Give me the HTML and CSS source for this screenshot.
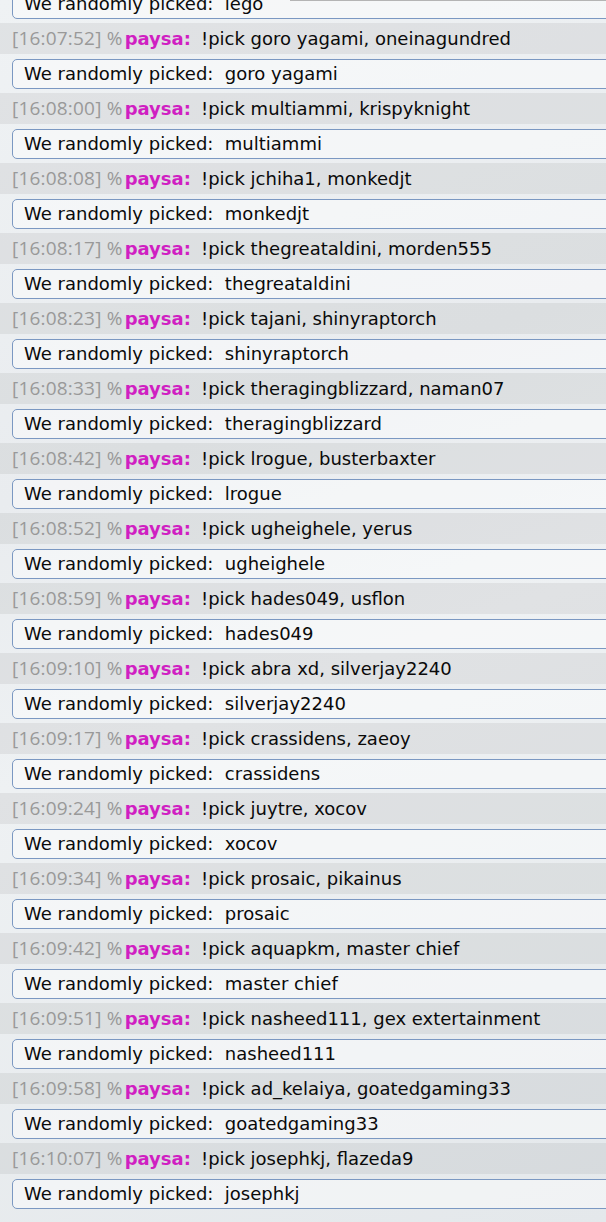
FILE: index.html
```html
<!DOCTYPE html>
<html lang="en">
<head>
    <meta charset="UTF-8">
    <meta name="viewport" content="width=device-width, initial-scale=1.0">
    <title>Chat log</title>
    <link rel="stylesheet" href="styles.css">
</head>
<body>
    <div class="topline"></div>

    <div class="chatlog">
        <div class="infobox">We randomly picked:&nbsp; lego</div>

        <div class="chat"><span class="stamp">[16:07:52] %</span><strong class="name">paysa:</strong><span class="msg">!pick goro yagami, oneinagundred</span></div>
        <div class="infobox">We randomly picked:&nbsp; goro yagami</div>

        <div class="chat"><span class="stamp">[16:08:00] %</span><strong class="name">paysa:</strong><span class="msg">!pick multiammi, krispyknight</span></div>
        <div class="infobox">We randomly picked:&nbsp; multiammi</div>

        <div class="chat"><span class="stamp">[16:08:08] %</span><strong class="name">paysa:</strong><span class="msg">!pick jchiha1, monkedjt</span></div>
        <div class="infobox">We randomly picked:&nbsp; monkedjt</div>

        <div class="chat"><span class="stamp">[16:08:17] %</span><strong class="name">paysa:</strong><span class="msg">!pick thegreataldini, morden555</span></div>
        <div class="infobox">We randomly picked:&nbsp; thegreataldini</div>

        <div class="chat"><span class="stamp">[16:08:23] %</span><strong class="name">paysa:</strong><span class="msg">!pick tajani, shinyraptorch</span></div>
        <div class="infobox">We randomly picked:&nbsp; shinyraptorch</div>

        <div class="chat"><span class="stamp">[16:08:33] %</span><strong class="name">paysa:</strong><span class="msg">!pick theragingblizzard, naman07</span></div>
        <div class="infobox">We randomly picked:&nbsp; theragingblizzard</div>

        <div class="chat"><span class="stamp">[16:08:42] %</span><strong class="name">paysa:</strong><span class="msg">!pick lrogue, busterbaxter</span></div>
        <div class="infobox">We randomly picked:&nbsp; lrogue</div>

        <div class="chat"><span class="stamp">[16:08:52] %</span><strong class="name">paysa:</strong><span class="msg">!pick ugheighele, yerus</span></div>
        <div class="infobox">We randomly picked:&nbsp; ugheighele</div>

        <div class="chat"><span class="stamp">[16:08:59] %</span><strong class="name">paysa:</strong><span class="msg">!pick hades049, usflon</span></div>
        <div class="infobox">We randomly picked:&nbsp; hades049</div>

        <div class="chat"><span class="stamp">[16:09:10] %</span><strong class="name">paysa:</strong><span class="msg">!pick abra xd, silverjay2240</span></div>
        <div class="infobox">We randomly picked:&nbsp; silverjay2240</div>

        <div class="chat"><span class="stamp">[16:09:17] %</span><strong class="name">paysa:</strong><span class="msg">!pick crassidens, zaeoy</span></div>
        <div class="infobox">We randomly picked:&nbsp; crassidens</div>

        <div class="chat"><span class="stamp">[16:09:24] %</span><strong class="name">paysa:</strong><span class="msg">!pick juytre, xocov</span></div>
        <div class="infobox">We randomly picked:&nbsp; xocov</div>

        <div class="chat"><span class="stamp">[16:09:34] %</span><strong class="name">paysa:</strong><span class="msg">!pick prosaic, pikainus</span></div>
        <div class="infobox">We randomly picked:&nbsp; prosaic</div>

        <div class="chat"><span class="stamp">[16:09:42] %</span><strong class="name">paysa:</strong><span class="msg">!pick aquapkm, master chief</span></div>
        <div class="infobox">We randomly picked:&nbsp; master chief</div>

        <div class="chat"><span class="stamp">[16:09:51] %</span><strong class="name">paysa:</strong><span class="msg">!pick nasheed111, gex extertainment</span></div>
        <div class="infobox">We randomly picked:&nbsp; nasheed111</div>

        <div class="chat"><span class="stamp">[16:09:58] %</span><strong class="name">paysa:</strong><span class="msg">!pick ad_kelaiya, goatedgaming33</span></div>
        <div class="infobox">We randomly picked:&nbsp; goatedgaming33</div>

        <div class="chat"><span class="stamp">[16:10:07] %</span><strong class="name">paysa:</strong><span class="msg">!pick josephkj, flazeda9</span></div>
        <div class="infobox">We randomly picked:&nbsp; josephkj</div>
    </div>
</body>
</html>
```

FILE: styles.css
```css
* {
    margin: 0;
    padding: 0;
    box-sizing: border-box;
}
html, body {
    overflow: hidden;
}
body {
    height: 100vh;
    font-family: "DejaVu Sans", Verdana, sans-serif;
    font-size: 18px;
    color: #0a0a0a;
    background: linear-gradient(160deg, #eff2f4 0%, #e9ecef 35%, #eef1f3 55%, #e4e8eb 100%);
}
.topline {
    position: absolute;
    top: 0;
    left: 290px;
    right: 0;
    height: 1px;
    background: #b4b4b4;
}
.chatlog {
    margin-top: -11px;
}
.chat {
    height: 31px;
    line-height: 31px;
    padding-left: 12px;
    margin-top: 4px;
    background: rgba(0, 0, 0, 0.06);
    white-space: nowrap;
}
.stamp {
    font-family: "Open Sans", "Liberation Sans", sans-serif;
    font-size: 19px;
    color: #999;
}
.stamp {
    letter-spacing: 0.2px;
}
.name {
    color: #d01fc2;
    margin-left: 2px;
}
.msg {
    margin-left: 10px;
}
.infobox {
    height: 30px;
    line-height: 28px;
    margin: 5px -12px 0 12px;
    padding-left: 11px;
    border: 1px solid #7b98c2;
    border-radius: 5px;
    background: rgba(255, 255, 255, 0.45);
    white-space: nowrap;
}
.chatlog > .infobox:first-child {
    margin-top: 0;
}
```
